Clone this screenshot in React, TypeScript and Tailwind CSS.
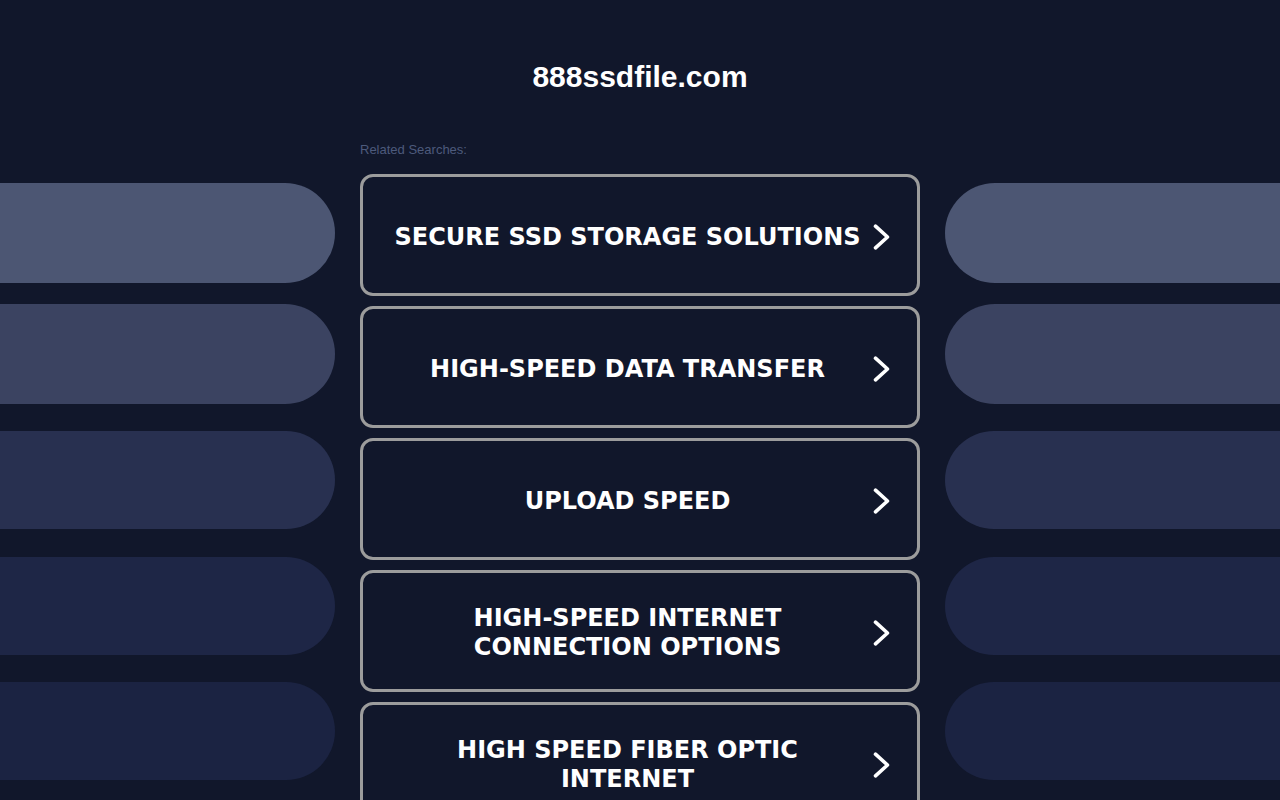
import React from 'react'

const searches = [
  'SECURE SSD STORAGE SOLUTIONS',
  'HIGH-SPEED DATA TRANSFER',
  'UPLOAD SPEED',
  'HIGH-SPEED INTERNET CONNECTION OPTIONS',
  'HIGH SPEED FIBER OPTIC INTERNET',
]

// Side decoration pills — top margin, height, colour
const pills = [
  { cls: 'mt-[183px] h-[100px] bg-[#4c5673]' },
  { cls: 'mt-[21px] h-[100px] bg-[#3b4361]' },
  { cls: 'mt-[27px] h-[98px] bg-[#283050]' },
  { cls: 'mt-[28px] h-[98px] bg-[#1e2646]' },
  { cls: 'mt-[27px] h-[98px] bg-[#1b2342]' },
]

function Chevron() {
  return (
    <svg viewBox="0 0 17 26" className="w-[17px] h-[26px]" fill="none" stroke="white"
      strokeWidth={3.6} strokeLinecap="round" strokeLinejoin="round">
      <path d="M2.5 2.2 L14.5 13 L2.5 23.8" />
    </svg>
  )
}

function SideColumn({ side }: { side: 'left' | 'right' }) {
  return (
    <div className="w-[335px] flex-none flex flex-col">
      {pills.map((p, i) => (
        <div
          key={i}
          className={`${p.cls} w-full ${side === 'left' ? 'rounded-r-full' : 'rounded-l-full'}`}
        />
      ))}
    </div>
  )
}

export default function App() {
  return (
    <div className="h-[800px] w-full overflow-hidden bg-[#11172b] flex font-['Liberation_Sans',Arial,sans-serif]">
      <SideColumn side="left" />

      <main className="w-[560px] flex-none mx-[25px] flex flex-col">
        <h1 className="mt-[59px] h-[36px] leading-[36px] text-center text-white font-bold text-[30px]">
          888ssdfile.com
        </h1>

        <p className="mt-[47px] text-[13px] leading-[16px] text-[#4d5a7c]">Related Searches:</p>

        <div className="mt-[16px] flex flex-col gap-[10px]">
          {searches.map((s) => (
            <a
              key={s}
              href="#"
              className="h-[122px] flex-none flex items-center pt-[4px] px-[20px] border-[3px] border-[#9c9c9c] rounded-[13px] bg-[#11172b]"
            >
              <span className="flex-1 px-[7px] text-center text-white font-bold text-[24px] leading-[29px] font-['DejaVu_Sans',Verdana,sans-serif]">
                {s}
              </span>
              <span className="w-[25px] flex justify-start pl-[1px]">
                <Chevron />
              </span>
            </a>
          ))}
        </div>
      </main>

      <SideColumn side="right" />
    </div>
  )
}
